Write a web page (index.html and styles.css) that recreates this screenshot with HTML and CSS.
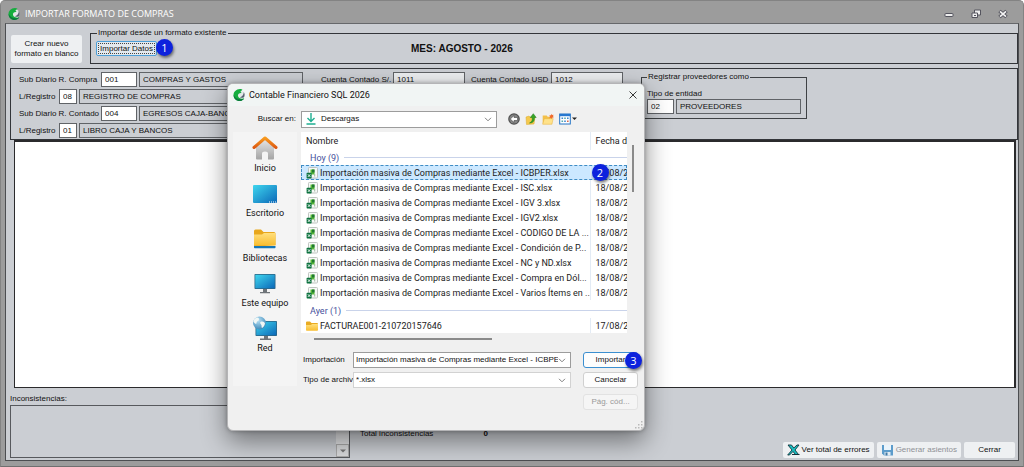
FILE: index.html
```html
<!DOCTYPE html>
<html lang="es">
<head>
<meta charset="utf-8">
<title>Importar formato de compras</title>
<link rel="stylesheet" href="styles.css">
</head>
<body>
<svg class="defs" aria-hidden="true">
  <defs>
    <linearGradient id="screen" x1="0" y1="0" x2="1" y2="1"><stop offset="0" stop-color="#3fd6ee"/><stop offset="1" stop-color="#0b68b8"/></linearGradient>
    <linearGradient id="roof" x1="0" y1="0" x2="0" y2="1"><stop offset="0" stop-color="#f79a1e"/><stop offset="1" stop-color="#dd5a12"/></linearGradient>
    <linearGradient id="wall" x1="0" y1="0" x2="0" y2="1"><stop offset="0" stop-color="#e6e6e6"/><stop offset="1" stop-color="#a4a4a4"/></linearGradient>
    <linearGradient id="gold" x1="0" y1="0" x2="0" y2="1"><stop offset="0" stop-color="#ffdf7c"/><stop offset="1" stop-color="#f8bd30"/></linearGradient>
    <radialGradient id="globe" cx=".4" cy=".3" r=".8"><stop offset="0" stop-color="#b9e1f5"/><stop offset="1" stop-color="#2f7fb2"/></radialGradient>
  </defs>
  <symbol id="logo" viewBox="0 0 12 12">
    <circle cx="6.5" cy="6" r="5" fill="#e3e8e8"/>
    <path d="M7 0C3 .2.3 3 .5 6.500.7 9.800 3.400 12 6.500 12c2 0 3.700-.9 4.700-2.400C9 10 5.500 9.500 5 7c-.4-2 1.400-3.300 3.600-2.900L7.400 2.500 9.500.7C8.800.2 8 0 7 0z" fill="#15ad3e"/>
    <path d="M.6 6C.8 9.500 3.400 12 6.500 12c2 0 3.700-.9 4.700-2.400C7 11 2.500 10 .6 6z" fill="#0c7a3d"/>
    <path d="M10.800 3c1 1.600 1.100 3.500.2 5.200C9.600 9 8 9 7 8.200c2.300-.4 3.600-2.400 3.800-5.200z" fill="#566170"/>
  </symbol>
  <symbol id="chevron" viewBox="0 0 8 5"><path d="M1 .8l3 3 3-3" fill="none" stroke="#808080"/></symbol>
  <symbol id="xlsx" viewBox="0 0 12 12">
    <rect x="2.500" y=".5" width="9" height="10.500" rx=".8" fill="#f7f9f7" stroke="#bfc4c0"/>
    <path d="M4.500 2.500h4v5h-4z" fill="#58b838"/><path d="M6 2.500h2.500v3H6z" fill="#217a32"/>
    <path d="M8.700 7v2.500" stroke="#9bb79c"/>
    <rect x=".6" y="5.800" width="5" height="5.600" rx=".6" fill="#0e7340"/>
    <path d="M1.900 7.300l2.400 2.600M4.300 7.300L1.900 9.900" stroke="#fff" stroke-width=".9"/>
  </symbol>
</svg>

<main class="window">
  <header class="titlebar">
    <svg class="logo"><use href="#logo"/></svg>
    <h1>IMPORTAR FORMATO DE COMPRAS</h1>
    <div class="winbuttons">
      <button type="button" aria-label="Minimizar"><svg viewBox="0 0 10 10"><rect x="1" y="4.500" width="8" height="3" rx=".5" fill="#eee" stroke="#54545e"/></svg></button>
      <button type="button" aria-label="Restaurar"><svg viewBox="0 0 10 10"><path d="M3.500 1h6v5h-6z" fill="#eee" stroke="#54545e"/><path d="M1 4h5.500v4.500H1z" fill="#eee" stroke="#54545e"/><path d="M3 6h2v1H3z" fill="#54545e"/></svg></button>
      <button type="button" aria-label="Cerrar ventana"><svg viewBox="0 0 10 10"><path d="M1.500 2l7 6M8.500 2l-7 6" stroke="#54545e" stroke-width="3.600"/><path d="M2 2.400l6 5.200M8 2.400L2 7.600" stroke="#f4f4f4" stroke-width="1.700"/></svg></button>
    </div>
  </header>

  <div class="client">
    <div class="top">
      <button type="button" class="btn create">Crear nuevo<br>formato en blanco</button>
      <fieldset class="group import">
        <legend>Importar desde un formato existente</legend>
        <div class="importrow">
          <span class="anchor"><button type="button" class="btn focus">Importar Datos</button><span class="badge">1</span></span>
          <strong class="month">MES: AGOSTO - 2026</strong>
        </div>
      </fieldset>
    </div>

    <section class="params">
      <div class="rows">
        <div class="row"><label class="wide" for="sd1">Sub Diario R. Compra</label><input class="code" id="sd1" value="001"><input class="desc" aria-label="Descripción sub diario compra" readonly value="COMPRAS Y GASTOS"></div>
        <div class="row"><label class="narrow" for="lr1">L/Registro</label><input class="mini" id="lr1" value="08"><input class="desc" aria-label="Descripción registro" readonly value="REGISTRO DE COMPRAS"></div>
        <div class="row"><label class="wide" for="sd2">Sub Diario R. Contado</label><input class="code" id="sd2" value="004"><input class="desc" aria-label="Descripción sub diario contado" readonly value="EGRESOS CAJA-BANCOS"></div>
        <div class="row"><label class="narrow" for="lr2">L/Registro</label><input class="mini" id="lr2" value="01"><input class="desc" aria-label="Descripción libro" readonly value="LIBRO CAJA Y BANCOS"></div>
      </div>
      <div class="row accounts"><label for="cs">Cuenta Contado S/.</label><input class="account" id="cs" value="1011"><label class="usd" for="cu">Cuenta Contado USD</label><input class="account" id="cu" value="1012"></div>
      <fieldset class="group suppliers">
        <legend>Registrar proveedores como</legend>
        <label for="te">Tipo de entidad</label>
        <div class="row"><input class="entity" id="te" value="02"><input class="desc" aria-label="Descripción de entidad" readonly value="PROVEEDORES"></div>
      </fieldset>
    </section>

    <section class="records" aria-label="Registros"></section>

    <footer class="bottom">
      <div class="issues">
        <label for="inc">Inconsistencias:</label>
        <div class="issuebox">
          <textarea id="inc" readonly></textarea>
          <div class="track"><button type="button" aria-label="Bajar"><svg viewBox="0 0 6 4"><path d="M0 .5h6l-3 3z" fill="#777"/></svg></button></div>
        </div>
      </div>
      <div class="total"><span>Total inconsistencias</span><b>0</b></div>
      <div class="actions">
        <button type="button" class="btn"><svg class="ico" viewBox="0 0 13 12"><path d="M1 1h3.500l2.300 3L10 1h2L8 6l3.500 4.500H8.500L6 7.500 2.500 11H.7L5 6z" fill="#19bfc3" stroke="#13343c" stroke-width=".9"/><path d="M5 10.500h7.500" stroke="#13343c"/></svg>Ver total de errores</button>
        <button type="button" class="btn off" disabled><svg class="ico" viewBox="0 0 12 12"><path d="M.5 1h11v10.500h-9l-2-2z" fill="#5c9ccb"/><path d="M2.500 1h7v5h-7z" fill="#eaf4fb"/><path d="M3 8h6v3.500H3z" fill="#e1ebf2"/><path d="M4 8.500h2v3H4z" fill="#4179a5"/></svg>Generar asientos</button>
        <button type="button" class="btn exit">Cerrar</button>
      </div>
    </footer>
  </div>
</main>

<div class="dialog" role="dialog" aria-labelledby="dlg">
  <header class="dlgtitle">
    <svg class="logo"><use href="#logo"/></svg>
    <h2 id="dlg">Contable Financiero SQL 2026</h2>
    <button type="button" aria-label="Cerrar diálogo"><svg viewBox="0 0 8 8"><path d="M.5.5l7 7M7.500.5l-7 7" stroke="#222" stroke-width=".9"/></svg></button>
  </header>

  <div class="lookup">
    <label for="folder">Buscar en:</label>
    <div class="combo place">
      <svg class="down" viewBox="0 0 10 12"><path d="M5 0v8M1.500 5L5 8.500 8.500 5M.5 11h9" fill="none" stroke="#1fae91" stroke-width="1.400"/></svg>
      <select id="folder"><option>Descargas</option></select>
      <svg class="chev"><use href="#chevron"/></svg>
    </div>
    <div class="tools">
      <button type="button" aria-label="Atrás"><svg viewBox="0 0 12 12"><circle cx="6" cy="6" r="5.800" fill="#4f4f4f"/><circle cx="6" cy="6" r="4.600" fill="#858585"/><path d="M6 2.500v2h3.500v3H6v2L2.300 6z" fill="#fff" stroke="#444" stroke-width=".6"/></svg></button>
      <button type="button" aria-label="Subir un nivel"><svg viewBox="0 0 12 12"><path d="M1 4l3-1 1 1h5l-1 7-7.500.5z" fill="#f5c94d" stroke="#dba82c" stroke-width=".5"/><path d="M4.500 10C7 9 7.500 7 7.200 4.500H5.300L8.300.7l2.900 3.800H9.300C9.700 8 8 10 4.500 10z" fill="#37a628" stroke="#1d7a1a" stroke-width=".5"/></svg></button>
      <button type="button" aria-label="Nueva carpeta"><svg viewBox="0 0 12 12"><path d="M.7 2.500h4l1 1.200h4.500v7.500H.7z" fill="#f3c04a"/><path d="M2.300 5.700h9l-1.500 5.500H.7z" fill="#ffe28a" stroke="#e4ae3c" stroke-width=".4"/><path d="M9.200.7l.7 1.400 1.600-.4-.5 1.500 1 1-1.600.3-.4 1.500-1-1.200-1.700.4.7-1.500-.8-1.300 1.600-.1z" fill="#ef6a2c"/></svg></button>
      <button type="button" class="view" aria-label="Vistas"><svg viewBox="0 0 18 12"><rect x=".7" y="1" width="10.600" height="10" fill="#fff" stroke="#2373c5"/><path d="M.5 1h11v2.200H.5z" fill="#2878d0"/><path d="M2.500 4.500h1.600v1.600H2.500zM5.200 7.500h1.600v1.600H5.200zM8 4.500h1.600v1.600H8z" fill="#3c86cf"/><path d="M5.200 4.500h1.600v1.600H5.200zM2.500 7.500h1.600v1.600H2.500z" fill="#53a9ad"/><path d="M8 7.500h1.600v1.600H8z" fill="#d76a4e"/><path d="M13 4.500h5L15.500 7z" fill="#222"/></svg></button>
    </div>
  </div>

  <div class="browse">
    <nav class="places">
      <a href="#inicio"><svg viewBox="0 0 26 26"><path d="M4 12l9-8 9 8v11.500q0 1-1 1h-5v-6q0-2-3-2t-3 2v6H5q-1 0-1-1z" fill="url(#wall)"/><path d="M2 12.500L13 3l11 9.500" fill="none" stroke="url(#roof)" stroke-width="3" stroke-linecap="round" stroke-linejoin="round"/></svg>Inicio</a>
      <a href="#escritorio"><svg viewBox="0 0 26 26"><rect x="1" y="5" width="24" height="18" rx="1" fill="url(#screen)"/><path d="M17 22h1M19 22h1M21 22h1M23 22h1" stroke="#fff"/></svg>Escritorio</a>
      <a href="#bibliotecas"><svg viewBox="0 0 26 26"><path d="M2 22V6q0-1.500 1.500-1.500H9L11.500 7H22q1.500 0 1.500 1.500V20z" fill="#e8a71c"/><path d="M2 9.500h8L12 8h11.500v12.500H2z" fill="url(#gold)"/><path d="M2 21h21.500v1.500q0 .8-.8.8H2.800q-.8 0-.8-.8z" fill="#1676b6"/></svg>Bibliotecas</a>
      <a href="#equipo"><svg viewBox="0 0 26 26"><path d="M11 18h4v4h3v1.300H8V22h3z" fill="#6f7479"/><rect x="2.500" y="4" width="21" height="15" rx=".8" fill="#2b6687"/><rect x="3.300" y="4.800" width="19.400" height="13.400" fill="url(#screen)"/></svg>Este equipo</a>
      <a href="#red"><svg viewBox="0 0 26 26"><path d="M12 20h4v3.500h3V25H8v-1.500h4z" fill="#6f7479"/><rect x="3.500" y="6" width="21.500" height="15" rx=".8" fill="#2b6687"/><rect x="4.300" y="6.800" width="19.900" height="13.400" fill="url(#screen)"/><circle cx="7.500" cy="8" r="6.500" fill="url(#globe)"/><path d="M4 3c2-1 3 0 3 1.500S4.500 6 4.500 8 2 8 1.300 6.500C1.500 5 2.500 3.500 4 3zM8.500 7c2-1 4 0 4.500 1.500-.5 2-1.500 3.500-3 4.500-1-1 0-2-.7-3S7.500 8 8.500 7z" fill="#f1f7f5"/></svg>Red</a>
    </nav>

    <div class="listing">
      <div class="sheet">
        <table>
          <colgroup><col><col class="datecol"></colgroup>
          <thead><tr><th>Nombre</th><th>Fecha d</th></tr></thead>
          <tbody>
            <tr class="heading"><td colspan="2"><span>Hoy (9)</span></td></tr>
            <tr class="selected"><td><span class="file"><svg><use href="#xlsx"/></svg>Importación masiva de Compras mediante Excel - ICBPER.xlsx</span><span class="badge">2</span></td><td>18/08/2026</td></tr>
            <tr><td><span class="file"><svg><use href="#xlsx"/></svg>Importación masiva de Compras mediante Excel - ISC.xlsx</span></td><td>18/08/2026</td></tr>
            <tr><td><span class="file"><svg><use href="#xlsx"/></svg>Importación masiva de Compras mediante Excel - IGV 3.xlsx</span></td><td>18/08/2026</td></tr>
            <tr><td><span class="file"><svg><use href="#xlsx"/></svg>Importación masiva de Compras mediante Excel - IGV2.xlsx</span></td><td>18/08/2026</td></tr>
            <tr><td><span class="file"><svg><use href="#xlsx"/></svg>Importación masiva de Compras mediante Excel - CODIGO DE LA ...</span></td><td>18/08/2026</td></tr>
            <tr><td><span class="file"><svg><use href="#xlsx"/></svg>Importación masiva de Compras mediante Excel - Condición de P...</span></td><td>18/08/2026</td></tr>
            <tr><td><span class="file"><svg><use href="#xlsx"/></svg>Importación masiva de Compras mediante Excel - NC y ND.xlsx</span></td><td>18/08/2026</td></tr>
            <tr><td><span class="file"><svg><use href="#xlsx"/></svg>Importación masiva de Compras mediante Excel - Compra en Dól...</span></td><td>18/08/2026</td></tr>
            <tr><td><span class="file"><svg><use href="#xlsx"/></svg>Importación masiva de Compras mediante Excel - Varios Ítems en ...</span></td><td>18/08/2026</td></tr>
            <tr class="heading later"><td colspan="2"><span>Ayer (1)</span></td></tr>
            <tr><td><span class="file"><svg viewBox="0 0 12 12"><path d="M0 10V2.500q0-1 1-1h3L5.500 3H11q1 0 1 1v6z" fill="#e9ab22"/><path d="M0 5h5l1-1h6v6q0 .8-.8.8H.8Q0 10.800 0 10z" fill="url(#gold)"/></svg>FACTURAE001-210720157646</span></td><td>17/08/2026</td></tr>
          </tbody>
        </table>
        <div class="vbar"></div>
      </div>
      <div class="hbar"></div>

      <form class="fields">
        <label for="name">Importación</label>
        <div class="combo strong"><input id="name" value="Importación masiva de Compras mediante Excel - ICBPER.xlsx"><svg class="chev"><use href="#chevron"/></svg></div>
        <span class="anchor"><button type="button" class="dbtn primary">Importar</button><span class="badge">3</span></span>
        <label for="type">Tipo de archivo:</label>
        <div class="combo"><select id="type"><option>*.xlsx</option></select><svg class="chev"><use href="#chevron"/></svg></div>
        <button type="button" class="dbtn">Cancelar</button>
        <button type="button" class="dbtn last" disabled>Pág. cód...</button>
      </form>
    </div>
  </div>
  <svg class="grip" viewBox="0 0 8 8"><path d="M6 0h1.500v1.500H6zM3 3h1.500v1.500H3zM6 3h1.500v1.500H6zM0 6h1.500v1.500H0zM3 6h1.500v1.500H3zM6 6h1.500v1.500H6z" fill="#b9b9b9"/></svg>
</div>
</body>
</html>
```
FILE: styles.css
```css
* { box-sizing: border-box; }
body { margin: 0; background: #fff; font: 8px/12px "Liberation Sans", Arial, sans-serif; color: #111; }
.defs { position: absolute; width: 0; height: 0; }
svg { display: block; flex: none; }
button, input, select, textarea { font: inherit; color: inherit; margin: 0; padding: 0; border: 0; background: none; border-radius: 0; }
button { white-space: nowrap; }
input { min-width: 0; outline: 0; }
.logo { width: 12px; height: 12px; }

/* Main window */
.window { display: flex; flex-direction: column; min-height: 100vh; padding: 0 4px 5px; background: #9c9c9c; border: 1px solid #838383; border-bottom-color: #6f6f6f; border-radius: 5px 5px 0 0; }
.titlebar { display: flex; align-items: center; gap: 5px; height: 22px; padding: 4px 3px 0; }
.titlebar h1 { flex: 1; margin: 0; font: 9px/14px "Open Sans", sans-serif; color: #fff; }
.winbuttons { display: flex; gap: 17px; padding-right: 8px; }
.winbuttons svg { width: 10px; height: 10px; }
.client { flex: 1; display: flex; flex-direction: column; padding: 4px 0 2px 4px; background: #cbced3; border: 1px solid #4c4e51; border-top-color: #66686b; }

.top { display: flex; gap: 8px; align-items: flex-end; }
.btn { display: inline-flex; align-items: center; justify-content: center; gap: 2px; height: 16px; padding: 0 4px; background: #eef0f2; border-radius: 2px; }
.create { width: 71px; height: 28px; margin: 0 0 1px 1px; padding: 0; line-height: 10px; }
.group { margin: 0; padding: 0; border: 1px solid #333539; min-width: 0; }
.group legend { padding: 0 1px; line-height: 10px; }
.import { flex: 1; height: 36px; }
.import legend { margin-left: 6px; }
.importrow { display: flex; align-items: center; gap: 254px; padding: 3px 5px 0; }
.anchor { position: relative; display: flex; }
.focus { width: 61px; height: 15px; padding: 0; background: #e3e9ee; border: 1px solid #4c9fd8; outline: 1px dotted #444; outline-offset: -3px; }
.badge { position: absolute; z-index: 2; right: -16px; top: -2px; width: 17px; height: 17px; border-radius: 50%; background: #0d22dd; color: #fff; font: 11px/17px "Open Sans", sans-serif; text-align: center; box-shadow: 1px 2px 3px rgba(0, 0, 0, .5); }
.month { font-size: 10px; }

.params { display: flex; align-items: flex-start; margin: 4px 0 0; padding: 3px 8px 1px; border: 1px solid #333539; }
.rows { display: flex; flex-direction: column; gap: 2px; width: 284px; }
.row { display: flex; align-items: center; gap: 2px; }
.row input { height: 15px; padding: 0 3px; background: #fff; border: 1px solid #606367; }
.row .desc { flex: 1; background: transparent; }
.wide { width: 80px; white-space: nowrap; }
.narrow { width: 38px; }
.row .code { width: 36px; }
.row .mini { width: 18px; }
.accounts { margin-left: 18px; }
.accounts label { width: 70px; white-space: nowrap; }
.accounts .usd { width: 82px; padding-left: 4px; }
.row .account { width: 72px; background: #eceef0; }
.suppliers { width: 166px; margin-left: 18px; padding: 0 5px 4px; border-color: #3e4144; }
.suppliers label { display: block; line-height: 11px; margin-top: 6px; }
.row .entity { width: 27px; }

.records { flex: 1; min-height: 120px; margin: 0 2px 0 4px; background: #fff; border: 1px solid #2b2b2d; border-width: 2px 2px 1px 1px; }
.bottom { display: flex; align-items: flex-end; margin-top: 5px; }
.issues { width: 340px; }
.issuebox { display: flex; height: 53px; border: 1px solid #57595d; }
.issuebox textarea { flex: 1; resize: none; outline: 0; }
.track { display: flex; align-items: flex-end; width: 13px; background: #e2e3e5; }
.track button { display: grid; place-items: center; width: 13px; height: 13px; background: #d9dadc; border: 1px solid #aaa; }
.track svg { width: 6px; height: 4px; }
.total { flex: 1; display: flex; gap: 50px; padding: 0 0 18px 10px; }
.actions { display: flex; gap: 3px; padding-right: 3px; }
.ico { width: 13px; height: 12px; }
.off { color: #8e9196; }
.exit { width: 51px; }

/* File dialog */
.dialog { position: absolute; left: 227px; top: 83px; width: 418px; padding: 0 5px 20px 5px; background: #f0f0f0; border: 1px solid #b4b4b6; border-radius: 6px; box-shadow: 0 10px 26px rgba(0, 0, 0, .45), 0 0 4px rgba(0, 0, 0, .3); font: 9px/14px Roboto, sans-serif; }
.dlgtitle { display: flex; align-items: center; gap: 4px; height: 22px; margin: 0 -5px; padding: 0 7px 0 5px; background: #f1f5f4; border-radius: 5px 5px 0 0; }
.dlgtitle h2 { flex: 1; margin: 0; font: inherit; }
.dlgtitle button svg { width: 8px; height: 8px; }
.lookup { display: flex; align-items: center; height: 26px; font: 8px/14px "Liberation Sans", Arial, sans-serif; }
.lookup label { width: 68px; padding-right: 5px; text-align: right; }
.combo { display: flex; align-items: center; height: 16px; min-width: 0; padding: 0 4px 0 2px; background: #fff; border: 1px solid #d2d2d2; }
.combo select, .combo input { flex: 1; min-width: 0; height: 14px; appearance: none; outline: 0; }
.combo.strong, .combo.place { border-color: #9c9c9c; }
.place { width: 196px; height: 17px; padding-left: 4px; gap: 5px; }
.down { width: 10px; height: 12px; }
.chev { width: 8px; height: 5px; }
.tools { display: flex; gap: 5px; margin-left: 11px; }
.tools svg { width: 12px; height: 12px; }
.tools .view svg { width: 18px; }

.browse { display: flex; gap: 4px; }
.places { width: 64px; height: 254px; background: #f4f4f4; }
.places a { display: flex; flex-direction: column; align-items: center; height: 45px; padding-top: 3px; color: inherit; text-decoration: none; }
.places svg { width: 26px; height: 26px; }
.listing { flex: 1; min-width: 0; }
.sheet { display: flex; gap: 5px; }
table { flex: 1; width: 0; table-layout: fixed; border-collapse: collapse; background: #fff; }
.datecol { width: 37px; }
th, td { height: 15px; padding: 0 0 0 5px; font-weight: 400; text-align: left; line-height: 14px; white-space: nowrap; overflow: hidden; color: #1c1c1c; }
th { height: 18px; }
th + th, td + td { border-left: 1px solid #e3ebf5; }
.file { display: flex; align-items: center; gap: 2px; }
.file svg { width: 12px; height: 12px; }
.heading td { padding-left: 9px; }
.heading span { display: flex; align-items: center; gap: 5px; color: #46509c; }
.heading span::after { content: ""; flex: 1; height: 1px; background: #c9d3ea; }
.later td { height: 18px; padding-top: 3px; }
.selected { background: #cce8ff; outline: 1px dashed #3f8cc4; outline-offset: -1px; }
.selected td:first-child { position: relative; overflow: visible; }
.selected .badge { top: -1px; right: -19px; }
.vbar { width: 2px; height: 47px; margin: 13px 5px 0 0; background: #8a8a8a; }
.hbar { width: 178px; height: 2px; margin: 5px 0 0 13px; background: #8a8a8a; }
.fields { display: grid; grid-template-columns: 50px 1fr 55px; row-gap: 4px; align-items: center; margin-top: 12px; padding: 0 1px 0 2px; font: 8px/14px "Liberation Sans", Arial, sans-serif; }
.fields label { white-space: nowrap; overflow: hidden; }
.fields .combo { margin-right: 12px; }
.dbtn { width: 55px; height: 16px; background: #fdfdfd; border: 1px solid #d0d0d0; border-radius: 3px; line-height: 14px; }
.primary { border-color: #3b8fd0; }
.dbtn:disabled { color: #9a9a9a; background: #f5f5f5; border-color: #e2e2e2; }
.last { grid-column: 3; margin-top: 2px; }
.fields .badge { right: -4px; top: 0; }
.grip { position: absolute; right: 1px; bottom: 1px; width: 8px; height: 8px; }
```
